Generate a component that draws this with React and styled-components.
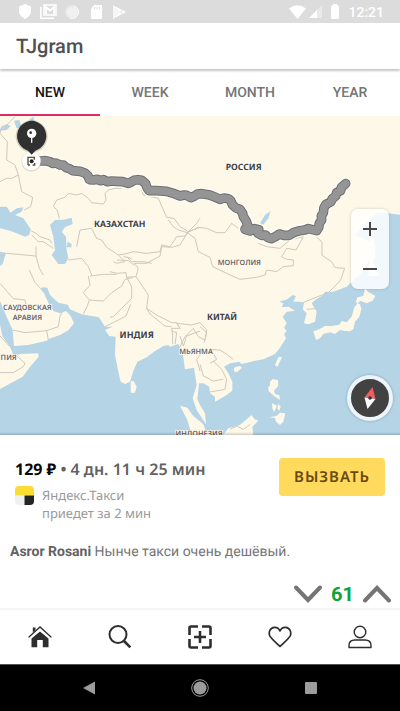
import React, { useState } from "react";
import styled, { createGlobalStyle } from "styled-components";

const GlobalStyle = createGlobalStyle`
  * { box-sizing: border-box; }
  body { margin: 0; background: #fff; font-family: Roboto, sans-serif; color: #757575; text-rendering: geometricPrecision; }
  button { margin: 0; padding: 0; border: 0; background: none; font: inherit; color: inherit; cursor: pointer; text-rendering: inherit; }
  svg { display: block; }
`;

const Screen = styled.div`
  min-height: 100vh;
  display: flex;
  flex-direction: column;
`;

const StatusBar = styled.div`
  height: 23px;
  padding: 0 16px 0 18px;
  display: flex;
  align-items: center;
  justify-content: space-between;
  background: #dcdcdc;
  color: #fff;
`;

const StatusGroup = styled.div`
  display: flex;
  align-items: center;
  gap: ${(p) => p.$gap}px;
`;

const Clock = styled.time`
  padding-top: 2px;
  font-size: 14px;
  line-height: 16px;
  font-weight: 500;
`;

const AppBar = styled.header`
  height: 46px;
  padding: 0 16px;
  display: flex;
  align-items: center;
  position: relative;
  z-index: 1;
  background: #fff;
  box-shadow: 0 2px 2px rgba(0, 0, 0, 0.22);
`;

const Title = styled.h1`
  margin: 0;
  font-size: 20px;
  line-height: 24px;
  font-weight: 500;
  color: #505050;
`;

const Tabs = styled.div`
  height: 47px;
  display: grid;
  grid-template-columns: repeat(4, 1fr);
`;

const Tab = styled.button`
  padding-top: 2px;
  font-size: 14px;
  line-height: 20px;
  font-weight: 500;
  color: ${(p) => (p.$active ? "#151515" : "#757575")};
  border-bottom: 2px solid ${(p) => (p.$active ? "#dc2d69" : "transparent")};
`;

const Post = styled.main`
  flex: 1;
`;

const MapFrame = styled.section`
  position: relative;
  height: 319px;
  overflow: hidden;
  background: #fef8e9;

  &::after {
    content: "";
    position: absolute;
    inset: auto 0 0;
    height: 3px;
    background: linear-gradient(transparent, rgba(0, 0, 0, 0.18));
  }
`;

const MapDrawing = styled.svg`
  width: 100%;
  height: 100%;
`;

const MapLabel = styled.text`
  font-family: "Noto Sans", sans-serif;
  font-weight: ${(p) => (p.$minor ? 600 : 700)};
  font-size: ${(p) => p.$size}px;
  fill: ${(p) => (p.$minor ? "#66666a" : "#424246")};
  stroke: #fffaf0;
  stroke-width: 5px;
  paint-order: stroke;
  text-anchor: middle;
`;

const ZoomPanel = styled.div`
  position: absolute;
  top: 93px;
  right: 11px;
  width: 38px;
  height: 80px;
  display: grid;
  grid-template-rows: 1fr 1fr;
  border-radius: 7px;
  background: rgba(255, 255, 255, 0.82);
  box-shadow: 0 0 3px rgba(90, 90, 90, 0.3);
`;

const ZoomButton = styled.button`
  display: grid;
  place-items: center;
`;

const CompassButton = styled.button`
  position: absolute;
  right: 7px;
  bottom: 14px;
  width: 46px;
  height: 46px;
  display: grid;
  place-items: center;
  border: 4px solid #edf4fa;
  border-radius: 50%;
  background: #424242;
  box-shadow: 0 0 3px rgba(60, 80, 100, 0.4);
`;

const Ride = styled.section`
  padding: 22px 15px 0;
  display: flex;
  align-items: flex-start;
  justify-content: space-between;
  font-family: "Noto Sans", sans-serif;
`;

const Price = styled.p`
  margin: 0 0 5px;
  font-size: 16px;
  line-height: 24px;
  font-weight: 600;
  color: #626262;
  white-space: nowrap;
`;

const Amount = styled.strong`
  font-weight: 700;
  color: #080808;
`;

const Service = styled.div`
  display: flex;
  gap: 8px;
`;

const ServiceText = styled.p`
  margin: 0;
  font-size: 13px;
  line-height: 18px;
  color: #9a9a9a;
`;

const ServiceLogo = styled.svg`
  width: 19px;
  height: 19px;
`;

const OrderButton = styled.button`
  margin-top: 1px;
  width: 106px;
  height: 38px;
  border-radius: 4px;
  background: #ffda5c;
  color: #694a12;
  font-size: 15px;
  line-height: 20px;
  font-weight: 600;
  letter-spacing: 1px;
`;

const Caption = styled.p`
  margin: 20px 10px 0;
  font-size: 14px;
  line-height: 20px;
`;

const Author = styled.strong`
  font-weight: 700;
  color: #626262;
`;

const Votes = styled.div`
  margin-top: 18px;
  padding: 0 9px;
  height: 28px;
  display: flex;
  align-items: center;
  justify-content: flex-end;
  gap: 9px;
`;

const Score = styled.output`
  font-size: 20px;
  line-height: 24px;
  font-weight: 700;
  color: #0ca43c;
`;

const BottomNav = styled.nav`
  height: 56px;
  display: grid;
  grid-template-columns: repeat(5, 1fr);
  border-top: 2px solid #f5f5f5;
  background: #fff;
`;

const NavButton = styled.button`
  display: grid;
  place-items: center;
  color: #2e2e2e;
`;

const SystemBar = styled.nav`
  height: 47px;
  padding: 0 34px;
  display: grid;
  grid-template-columns: repeat(3, 1fr);
  border-top: 1px solid #555;
  background: #000;
`;

const SystemButton = styled.button`
  display: grid;
  place-items: center;
  color: #9c9c9c;
`;

const labels = [
  { text: "РОССИЯ", x: 731, y: 162, size: 26 },
  { text: "КАЗАХСТАН", x: 359, y: 333, size: 26 },
  { text: "МОНГОЛИЯ", x: 718, y: 446, size: 22, minor: true },
  { text: "КИТАЙ", x: 666, y: 611, size: 26 },
  { text: "ИНДИЯ", x: 410, y: 667, size: 27 },
  { text: "МЬЯНМА", x: 588, y: 714, size: 22, minor: true },
  { text: "САУДОВСКАЯ", x: 82, y: 583, size: 22, minor: true },
  { text: "АРАВИЯ", x: 82, y: 612, size: 22, minor: true },
  { text: "ПИЯ", x: 26, y: 731, size: 22, minor: true },
  { text: "ИНДОНЕЗИЯ", x: 597, y: 960, size: 22, minor: true },
];

const route =
  "M110 135H122L136 134L150 137L158 142L168 141L180 147L190 147L198 155L208 158L218 164L240 166L256 172L264 180L268 191L280 192L292 190L302 194L310 191L322 197L334 195L350 196L368 197L385 202L394 198L402 193L414 191L425 193L437 203L441 215L447 224L470 224L500 226L520 232L540 240L552 237L560 238L572 245L584 240L592 234L606 233L625 236L640 241L660 250L672 246L685 248L692 254L697 266L708 276L720 280L728 292L730 302L738 314L744 330L735 340L750 345L764 338L776 341L774 352L785 358L796 357L804 365L814 368L826 362L838 354L852 358L868 358L880 350L900 344L914 342L925 338L950 344L956 334L958 322L965 312L964 300L970 290L972 275L978 265L992 258L997 248L1007 240L1010 230L1022 224L1024 214L1037 203";

function RouteMap() {
  return (
    <MapDrawing viewBox="0 0 1200 957" preserveAspectRatio="xMidYMid slice" role="img" aria-label="Маршрут на карте">
      <rect width="1200" height="957" fill="#fef8e9" />
      <g fill="#b5d5e7">
        <path d="M0 819L68 782L90 752L115 724V712L60 714L42 722L30 692L8 662L0 627V555L20 602L38 642L42 690L85 687L140 674L148 668L180 657L205 643L222 622L212 600L198 585L180 592L160 585L145 560L132 532L122 520L128 514L142 515L150 537L175 560L203 566L210 580L245 595L297 604L315 632H338L315 642L328 660L347 662L345 717L354 762L362 797L375 804L390 797L400 765L412 737L440 724L465 705L490 690L505 687L510 692L535 684L548 710L555 760L582 755L590 807L578 847L590 882L606 907L618 925L615 892L600 867L592 850L597 802H610L628 812L630 832L645 842V857L675 840L697 824V797L685 772L672 752L690 742L718 737L725 744L765 734L790 730L825 714L840 695L858 667L852 655L860 645L852 635L860 622L848 602L860 587L885 584L865 572L845 574L850 562L838 557L862 550L878 537L888 540L880 557H900L912 562L908 580L920 592L912 622L925 625L945 617L950 587L935 562L945 552L970 537L975 527H1000L1040 512L1085 470L1110 430L1120 390L1100 372L1065 357L1100 322L1130 292H1165L1200 296V957H0Z" />
        <g transform="translate(0 -18)">
          <path d="M0 290L20 290L32 308L50 295L70 292L65 305L45 315L70 325L92 357L88 375L75 380L50 370L30 362L0 355Z" />
          <path d="M150 345L165 330L190 329L215 323L218 342L195 352L185 365L198 380L200 420L205 445L195 462H175L155 435L165 420L160 380Z" />
          <path d="M203 395L215 402L214 412L200 412ZM0 425L18 428L8 462L0 468ZM0 58L20 43L32 48L20 60L0 62ZM42 32L58 30L65 50L50 55ZM88 28L100 20L103 32L92 38Z" />
          <path d="M780 340L795 315L812 303L805 325L790 344Z" />
        </g>
      </g>
      <g fill="#fef8e9">
        <path d="M540 869L562 875L580 900L610 925L622 957H575L562 912Z" />
        <path d="M392 797L400 794L410 812L405 830H392Z" />
        <path d="M1112 362L1122 375L1127 410L1120 440L1140 480H1105L1108 430L1100 400Z" />
        <g transform="translate(600 462)">
          <path d="M68 497L85 475L120 465L155 435L163 447L175 452L157 470L160 497Z" />
          <path d="M210 335L218 327L234 330L235 347L222 362L225 372L238 376L240 390L222 378L205 362V350L210 348ZM216 400L231 407L222 427L217 415ZM235 402L242 410L238 422L232 415ZM208 442L230 438L240 428L256 430L250 455L240 465L228 455L225 444Z" />
          <path d="M225 285L236 260L246 262L232 291ZM102 295L108 290L120 288L126 293L110 307L102 303Z" />
          <path d="M340 184L358 178L375 168L395 168L418 164L425 153L440 157L455 140L463 112L472 101L480 102L484 118L478 140L465 155L460 178L450 184L430 182L420 180L405 192L390 187L370 192L360 205L348 210Z" />
          <path d="M468 95L472 82L490 78L495 55L505 66L526 78L518 92L500 100L480 92L472 103Z" />
        </g>
      </g>
      <g fill="none" stroke="#cfc9bd" strokeWidth="3" strokeLinejoin="round">
        <g transform="translate(0 -18)">
          <path d="M45 20L20 45L5 50L0 70L22 95L20 150L45 165L55 195L35 205L20 205L0 215M55 195L65 245L98 262L92 290L72 300" />
          <path d="M178 325L172 300L160 290L170 270L195 262L205 250L230 255L245 250L265 265L275 278L310 282L318 270L315 250L325 240L345 235L365 235M425 240L430 255L475 265L490 300L500 322L522 325L540 350L565 365L600 352" />
          <path d="M230 410L240 360L275 355L290 385L305 390L320 412L355 435L375 432L400 425L440 430L480 425L485 405L510 410L530 380L555 378L565 365L590 340L600 325" />
          <path d="M92 362L108 370L120 380L150 390L155 400M95 375L115 395L130 395L145 405L160 415M108 410V440M0 440L20 430L108 438L118 475L130 495M205 450L245 445L265 470L275 495M355 435L375 455L350 460L340 455M380 440L395 455L430 455L455 460" />
        </g>
        <g transform="translate(330 312)">
          <path d="M175 0L190 20L205 30L232 38L265 22L290 25L320 38L345 38L365 10L385 25M232 38L255 55L265 95L300 112L308 140L350 160L390 178L440 172L465 165L470 150L500 155L520 140L550 137V120L530 118L515 110L530 85L558 90L580 50L540 60L510 85L470 80L445 70" />
          <path d="M232 38L210 75L185 82L155 80L150 108L110 130H72L85 145L78 170L50 172L65 200V235L35 265L10 290L0 292M78 170L105 210L115 225L110 265L140 285L185 308H200L210 325H185L188 345V372M110 265L120 282L165 318L185 320M210 325L200 310L245 315L270 308L290 330L285 360L265 350L250 325L225 350L205 390" />
          <path d="M20 120L55 122L72 135M40 110L65 115M0 155L20 160L48 158L50 172" />
        </g>
        <path d="M950 364L966 378V418L995 437L1005 455L1034 457L1022 492L1005 510L985 530M265 480L270 508L250 530L268 552L262 570L250 594M268 552L310 555L335 530L365 510L375 490L398 485M270 480L310 475L350 475M0 502L40 548L75 552L80 576M88 462L105 500L125 520M38 642L75 650L140 644L175 632L180 600L192 580M140 644L145 672M0 660L28 690L40 696M45 715L75 742L70 752L40 770H0M315 632L355 612L378 600L392 565M515 645L530 650L525 685M540 660L550 690L560 660L600 645M600 765L590 730L610 705L640 712L650 730L630 742M630 700L660 702L680 715L700 730M640 735L665 760L680 790L675 820L630 828M600 745L610 780L640 795L670 790M600 632L620 650L612 680" />
        <path d="M985 530L945 545L905 562M920 580L945 578M690 940L710 930L730 940L750 925" />
      </g>
      <g fill="none" strokeLinecap="round" strokeLinejoin="round">
        <path d={route} stroke="#fffdf8" strokeWidth="36" />
        <path d={route} stroke="#6e6e6e" strokeWidth="29" />
        <path d={route} stroke="#959595" strokeWidth="23" />
      </g>
      {labels.map((label) => (
        <MapLabel key={label.text} x={label.x} y={label.y} $size={label.size} $minor={label.minor}>
          {label.text}
        </MapLabel>
      ))}
      <circle cx="94" cy="137" r="30" fill="#a9a295" opacity="0.35" />
      <circle cx="94" cy="135" r="28" fill="#fff" />
      <path d="M84 147V124H103V131M84 147H90M98 147H104V141" fill="none" stroke="#5b4a26" strokeWidth="4" />
      <circle cx="95" cy="136" r="6" fill="#222" />
      <circle cx="95" cy="61" r="48" fill="#8d887d" opacity="0.35" />
      <path d="M95 14a46 46 0 0 1 11 90l-11 12l-11-12a46 46 0 0 1 11-90Z" fill="#303030" />
      <circle cx="95" cy="52" r="14" fill="#fff" />
      <path d="M95 62V79" stroke="#fff" strokeWidth="4" strokeLinecap="round" />
      <circle cx="92" cy="50" r="4" fill="#303030" />
    </MapDrawing>
  );
}

function Chevron({ up }) {
  return (
    <svg width="28" height="18" viewBox="0 0 28 18" fill="none" stroke="#757575" strokeWidth="4" strokeLinecap="round">
      <path d={up ? "M2 15.500L14 3L26 15.500" : "M2 2.500L14 15L26 2.500"} />
    </svg>
  );
}

const tabs = ["NEW", "WEEK", "MONTH", "YEAR"];

const navItems = [
  {
    label: "Home",
    icon: (
      <svg width="24" height="24" viewBox="0 0 24 24" fill="currentColor">
        <path d="M12 6.600L3.500 13.500V22.200H9.200V15H14.800V22.200H20.500V13.500Z" />
        <path d="M1 12L12 2L23 12" fill="none" stroke="currentColor" strokeWidth="1.300" strokeLinecap="round" />
        <path d="M4.800 2.500H7.500V5L4.800 7.500Z" />
      </svg>
    ),
  },
  {
    label: "Search",
    icon: (
      <svg width="24" height="24" viewBox="0 0 24 24" fill="none" stroke="currentColor" strokeWidth="2">
        <circle cx="10" cy="9.500" r="8.500" />
        <path d="M16 16L22.300 22.300" strokeWidth="2.600" />
      </svg>
    ),
  },
  {
    label: "Add",
    icon: (
      <svg width="24" height="24" viewBox="0 0 24 24" fill="none" stroke="currentColor" strokeWidth="2.600">
        <path d="M1.500 10V3Q1.500 1.500 3 1.500H10M14 1.500H21Q22.500 1.500 22.500 3V10M22.500 14V21Q22.500 22.500 21 22.500H14M10 22.500H3Q1.500 22.500 1.500 21V14M6 12H18M12 6V18" />
      </svg>
    ),
  },
  {
    label: "Likes",
    icon: (
      <svg width="24" height="24" viewBox="0 0 24 24" fill="none" stroke="currentColor" strokeWidth="1.700" strokeLinejoin="round">
        <path d="M12 21.500C8 17.500 3.500 14 1.800 10.800C.3 7.500 2 2.600 6.500 2.300C9 2.200 11 3.600 12 6C13 3.600 15 2.200 17.500 2.300C22 2.600 23.700 7.500 22.200 10.800C20.500 14 16 17.500 12 21.500Z" />
      </svg>
    ),
  },
  {
    label: "Profile",
    icon: (
      <svg width="24" height="24" viewBox="0 0 24 24" fill="none" stroke="currentColor" strokeWidth="1.400" strokeLinejoin="round">
        <circle cx="12" cy="7" r="5.800" />
        <path d="M1 22.500V20.500C1 17 3.500 15 7 15H17C20.500 15 23 17 23 20.500V22.500Z" />
      </svg>
    ),
  },
];

export default function App() {
  const [activeTab, setActiveTab] = useState("NEW");
  const [score, setScore] = useState(61);

  return (
    <Screen>
      <GlobalStyle />
      <StatusBar>
        <StatusGroup $gap={8}>
          <svg width="14" height="15" viewBox="0 0 14 15" fill="currentColor">
            <path d="M7 0L13 2.500V7C13 10.500 10.500 13.500 7 15C3.500 13.500 1 10.500 1 7V2.500Z" />
          </svg>
          <svg width="17" height="15" viewBox="0 0 17 15" fill="none" stroke="currentColor">
            <path d="M.8 3V14.200H14" strokeWidth="1.500" />
            <path d="M4 1H16V11H4Z" strokeWidth="1.500" />
            <path d="M6 10V3L10 6.500L14 3V10" strokeWidth="1.700" />
          </svg>
          <svg width="14" height="14" viewBox="0 0 14 14">
            <circle cx="7" cy="7" r="6" fill="#f1f1f1" stroke="#e8e8e8" strokeWidth="2" />
            <path d="M9 1A6.300 6.300 0 0 1 5 13" fill="none" stroke="#fff" />
          </svg>
          <svg width="17" height="14" viewBox="0 0 17 14" fill="currentColor">
            <path d="M7 0H14Q15 0 15 1V13Q15 14 14 14H5Q4 14 4 13V4Z" />
            <path d="M7.500 2V4.500M10 2V4.500M12.500 2V4.500" stroke="#dcdcdc" />
          </svg>
          <svg width="14" height="14" viewBox="0 0 14 14" fill="currentColor">
            <path d="M1 0L8 7L1 14Z" opacity="0.75" />
            <path d="M1 0L10 5L8 7ZM1 14L10 9L8 7ZM9 7L11 5L14 7L11 9Z" />
          </svg>
        </StatusGroup>
        <StatusGroup $gap={3}>
          <svg width="17" height="14" viewBox="0 0 17 14" fill="currentColor">
            <path d="M0 3.500Q8.500-3 17 3.500L8.500 14Z" />
          </svg>
          <svg width="13" height="13" viewBox="0 0 13 13" fill="currentColor">
            <path d="M13 0V13H0Z" opacity="0.4" />
            <path d="M8 5V13H0Z" />
          </svg>
          <svg width="20" height="15" viewBox="0 0 20 15" fill="currentColor">
            <path d="M6 1.500H8V0H12V1.500H13Q14 1.500 14 2.500V14Q14 15 13 15H7Q6 15 6 14V2.500Q6 1.500 7 1.500Z" />
          </svg>
          <Clock>12:21</Clock>
        </StatusGroup>
      </StatusBar>

      <AppBar>
        <Title>TJgram</Title>
      </AppBar>

      <Tabs role="tablist">
        {tabs.map((name) => (
          <Tab
            key={name}
            role="tab"
            aria-selected={name === activeTab}
            $active={name === activeTab}
            onClick={() => setActiveTab(name)}
          >
            {name}
          </Tab>
        ))}
      </Tabs>

      <Post>
        <MapFrame>
          <RouteMap />
          <ZoomPanel>
            <ZoomButton aria-label="Приблизить">
              <svg width="14" height="14" viewBox="0 0 14 14" stroke="#484848" strokeWidth="2">
                <path d="M7 0V14M0 7H14" />
              </svg>
            </ZoomButton>
            <ZoomButton aria-label="Отдалить">
              <svg width="14" height="14" viewBox="0 0 14 14" stroke="#484848" strokeWidth="2">
                <path d="M0 7H14" />
              </svg>
            </ZoomButton>
          </ZoomPanel>
          <CompassButton aria-label="Компас">
            <svg width="14" height="24" viewBox="0 0 14 24">
              <path d="M9.500 1L12.500 13L1.500 11.500Z" fill="#f05d60" />
              <path d="M1.500 11.500L12.500 13L4.500 23Z" fill="#fff" />
              <circle cx="7" cy="12" r="1.800" fill="#333" />
            </svg>
          </CompassButton>
        </MapFrame>

        <Ride>
          <div>
            <Price>
              <Amount>129 ₽</Amount> • 4 дн. 11 ч 25 мин
            </Price>
            <Service>
              <ServiceLogo viewBox="0 0 19 19" aria-hidden="true">
                <path d="M4 0H15Q19 0 19 4V9.500H0V4Q0 0 4 0Z" fill="#fbdc32" />
                <path d="M0 9.500H9.500V19H4Q0 19 0 15Z" fill="#f0f0ee" />
                <path d="M9.500 9.500H19V15Q19 19 15 19H9.500Z" fill="#242424" />
              </ServiceLogo>
              <ServiceText>
                Яндекс.Такси
                <br />
                приедет за 2 мин
              </ServiceText>
            </Service>
          </div>
          <OrderButton>ВЫЗВАТЬ</OrderButton>
        </Ride>

        <Caption>
          <Author>Asror Rosani</Author> Нынче такси очень дешёвый.
        </Caption>

        <Votes>
          <button aria-label="Vote down" onClick={() => setScore(score - 1)}>
            <Chevron />
          </button>
          <Score>{score}</Score>
          <button aria-label="Vote up" onClick={() => setScore(score + 1)}>
            <Chevron up />
          </button>
        </Votes>
      </Post>

      <BottomNav aria-label="Main">
        {navItems.map((item) => (
          <NavButton key={item.label} aria-label={item.label}>
            {item.icon}
          </NavButton>
        ))}
      </BottomNav>

      <SystemBar aria-label="System">
        <SystemButton aria-label="Back">
          <svg width="12" height="14" viewBox="0 0 12 14" fill="currentColor">
            <path d="M12 .5V13.500L0 7Z" />
          </svg>
        </SystemButton>
        <SystemButton aria-label="Home screen">
          <svg width="18" height="18" viewBox="0 0 18 18" fill="currentColor">
            <circle cx="9" cy="9" r="6.500" />
            <circle cx="9" cy="9" r="8.300" fill="none" stroke="currentColor" />
          </svg>
        </SystemButton>
        <SystemButton aria-label="Recent apps">
          <svg width="12" height="12" viewBox="0 0 12 12" fill="currentColor">
            <rect width="12" height="12" rx="1" />
          </svg>
        </SystemButton>
      </SystemBar>
    </Screen>
  );
}
